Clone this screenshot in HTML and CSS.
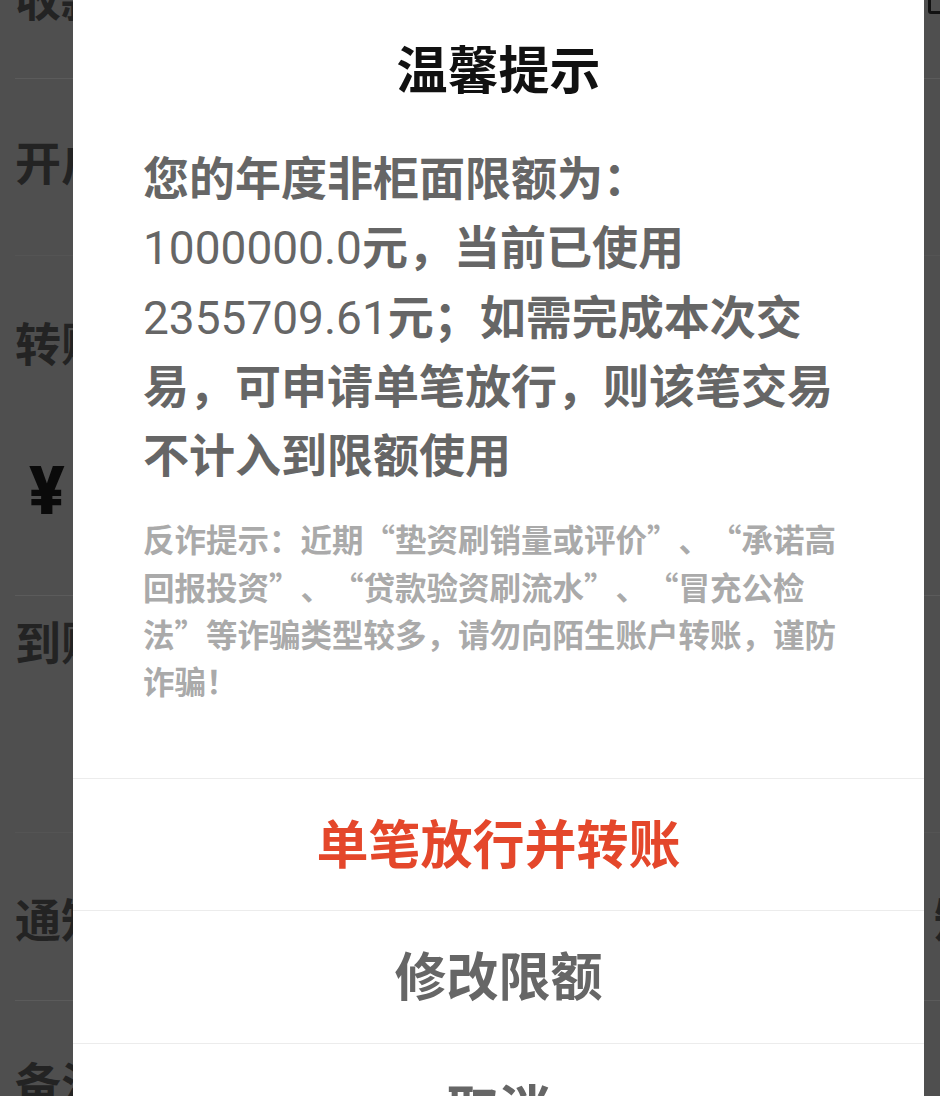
FILE: index.html
```html
<!DOCTYPE html>
<html lang="zh-CN">
<head>
<meta charset="utf-8">
<title>温馨提示</title>
<link rel="stylesheet" href="styles.css">
</head>
<body>
<div class="page">
  <div class="form">
    <div class="row r1"><span class="label">收款人</span><span class="box"></span></div>
    <div class="row r2 faint"><span class="label">开户行</span></div>
    <div class="row r3">
      <span class="label">转账金额</span>
      <span class="amount">¥</span>
    </div>
    <div class="row r4 faint"><span class="label">到账时间</span></div>
    <div class="row r5"><span class="label">通知收款人</span><span class="side">短信通知</span></div>
    <div class="row r6"><span class="label">备注</span></div>
  </div>

  <div class="dialog">
    <div class="title">温馨提示</div>
    <p class="msg">您的年度非柜面限额为：<span class="num">1000000.0</span>元，当前已使用<span class="num">2355709.61</span>元；如需完成本次交易，可申请单笔放行，则该笔交易不计入到限额使用</p>
    <p class="warn">反诈提示：近期“垫资刷销量或评价”、“承诺高回报投资”、“贷款验资刷流水”、“冒充公检法”等诈骗类型较多，请勿向陌生账户转账，谨防诈骗！</p>
    <div class="actions">
      <div class="btn primary">单笔放行并转账</div>
      <div class="btn">修改限额</div>
      <div class="btn">取消</div>
    </div>
  </div>
</div>
</body>
</html>
```
FILE: styles.css
```css
html, body {
  margin: 0;
  padding: 0;
}
body {
  font-family: "Noto Sans CJK SC", sans-serif;
  background: #4f4f4f;
}
.page {
  position: relative;
  width: 940px;
  height: 1096px;
  overflow: hidden;
  background: #4f4f4f;
}
.form {
  margin-top: -86px;
  padding-left: 15px;
}
.row {
  display: flex;
  align-items: center;
  justify-content: space-between;
  border-bottom: 1px solid #5b5b5b;
  box-sizing: border-box;
}
.row.faint {
  border-bottom-color: #545454;
}
.label {
  font-size: 46px;
  line-height: 46px;
  font-weight: 700;
  color: #232323;
  white-space: nowrap;
}
.r1 {
  height: 165px;
}
.box {
  width: 30px;
  height: 30px;
  border: 3px solid #111;
  margin-right: -24px;
  align-self: flex-end;
  margin-bottom: 64px;
  border-radius: 3px;
}
.r2 {
  height: 177px;
  padding-bottom: 14px;
}
.r3 {
  height: 340px;
  flex-direction: column;
  align-items: flex-start;
  justify-content: flex-start;
  padding-top: 62px;
}
.amount {
  margin-top: 93px;
  margin-left: 14px;
  font-family: Roboto, sans-serif;
  font-size: 66px;
  line-height: 70px;
  font-weight: 900;
  color: #0a0a0a;
}
.r4 {
  height: 237px;
  align-items: flex-start;
  padding-top: 21px;
}
.r5 {
  height: 168px;
}
.side {
  font-size: 46px;
  font-weight: 700;
  color: #232323;
  margin-right: -178px;
}
.r6 {
  height: 160px;
  border-bottom: none;
}
.dialog {
  position: absolute;
  left: 73px;
  top: 0;
  width: 851px;
  background: #fff;
}
.title {
  padding-top: 32px;
  font-size: 51px;
  line-height: 70px;
  font-weight: 700;
  color: #111;
  text-align: center;
}
.msg,
.warn {
  text-spacing-trim: space-all;
  font-weight: 700;
}
.msg {
  margin: 39px 85px 0 70px;
  font-size: 46px;
  line-height: 69.3px;
  color: #666;
}
.num {
  font-family: Roboto, sans-serif;
  font-weight: 400;
  line-height: 1;
}
.warn {
  margin: 28px 85px 0 70px;
  font-size: 31.5px;
  line-height: 47.3px;
  color: #aaa;
}
.actions {
  margin-top: 73px;
}
.btn {
  display: flex;
  align-items: center;
  justify-content: center;
  box-sizing: border-box;
  height: 132.5px;
  padding-bottom: 6px;
  border-top: 1px solid #ececec;
  font-size: 52px;
  font-weight: 700;
  color: #666;
}
.btn.primary {
  color: #e4472b;
}
```
